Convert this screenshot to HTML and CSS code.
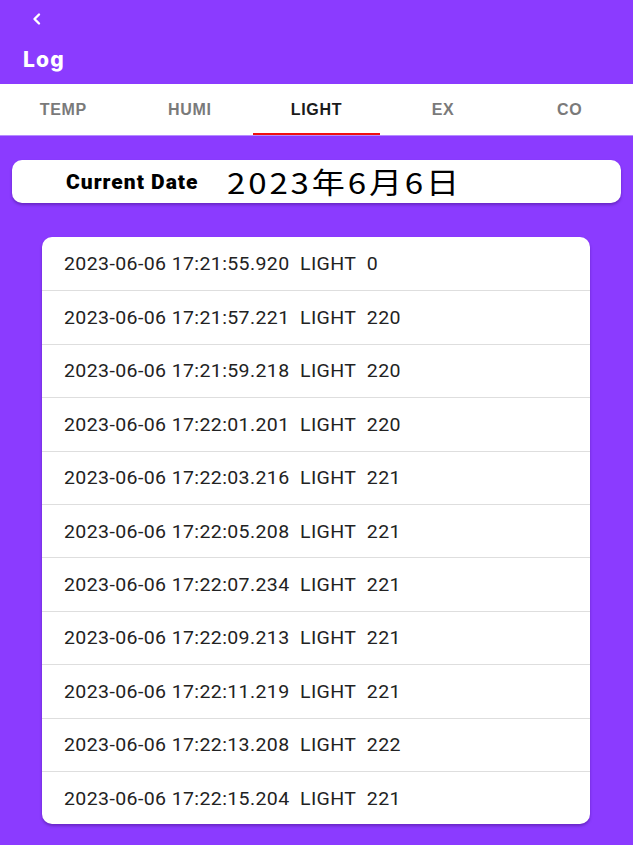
FILE: index.html
```html
<!DOCTYPE html>
<html>
<head>
<meta charset="utf-8">
<link rel="stylesheet" href="styles.css">
</head>
<body>
<div class="app">
  <header class="appbar">
    <div class="back">
      <svg width="14" height="14" viewBox="0 0 14 14"><path d="M9 2.5 L4.5 7 L9 11.5" fill="none" stroke="#fff" stroke-width="2.4" stroke-linecap="round" stroke-linejoin="round"/></svg>
    </div>
    <h1 class="title">Log</h1>
  </header>
  <nav class="tabs">
    <div class="tab">TEMP</div>
    <div class="tab">HUMI</div>
    <div class="tab active">LIGHT</div>
    <div class="tab">EX</div>
    <div class="tab">CO</div>
  </nav>
  <main class="content">
    <div class="date-card">
      <span class="date-label">Current Date</span>
      <span class="date-value">2023年6月6日</span>
    </div>
    <ul class="log-list">
      <li class="log-row"><span class="row-text">2023-06-06 17:21:55.920&nbsp; LIGHT&nbsp; 0</span></li>
      <li class="log-row"><span class="row-text">2023-06-06 17:21:57.221&nbsp; LIGHT&nbsp; 220</span></li>
      <li class="log-row"><span class="row-text">2023-06-06 17:21:59.218&nbsp; LIGHT&nbsp; 220</span></li>
      <li class="log-row"><span class="row-text">2023-06-06 17:22:01.201&nbsp; LIGHT&nbsp; 220</span></li>
      <li class="log-row"><span class="row-text">2023-06-06 17:22:03.216&nbsp; LIGHT&nbsp; 221</span></li>
      <li class="log-row"><span class="row-text">2023-06-06 17:22:05.208&nbsp; LIGHT&nbsp; 221</span></li>
      <li class="log-row"><span class="row-text">2023-06-06 17:22:07.234&nbsp; LIGHT&nbsp; 221</span></li>
      <li class="log-row"><span class="row-text">2023-06-06 17:22:09.213&nbsp; LIGHT&nbsp; 221</span></li>
      <li class="log-row"><span class="row-text">2023-06-06 17:22:11.219&nbsp; LIGHT&nbsp; 221</span></li>
      <li class="log-row"><span class="row-text">2023-06-06 17:22:13.208&nbsp; LIGHT&nbsp; 222</span></li>
      <li class="log-row"><span class="row-text">2023-06-06 17:22:15.204&nbsp; LIGHT&nbsp; 221</span></li>
    </ul>
  </main>
</div>
</body>
</html>
```
FILE: styles.css
```css
* { box-sizing: border-box; }
html, body { margin: 0; padding: 0; }
body {
  background: #8b3bff;
  font-family: Roboto, "Noto Sans", sans-serif;
  width: 633px;
  height: 845px;
  overflow: hidden;
}
.appbar {
  height: 84px;
  background: #8b3bff;
  padding: 11px 0 0 22px;
}
.back {
  width: 14px;
  height: 14px;
  margin-left: 8px;
}
.title {
  margin: 21px 0 0 1px;
  color: #fff;
  font-family: Inter, Lato, sans-serif;
  font-weight: 800;
  font-size: 21px;
  line-height: 28px;
  letter-spacing: 1.2px;
}
.tabs {
  display: flex;
  height: 52px;
  background: #fff;
  border-bottom: 1px solid #b58cff;
}
.tab {
  flex: 1;
  display: flex;
  align-items: center;
  justify-content: center;
  font-family: "Liberation Sans", Arial, sans-serif;
  font-weight: bold;
  font-size: 16px;
  letter-spacing: 0.7px;
  color: #7a7a7a;
  border-bottom: 2px solid transparent;
  padding-top: 2px;
}
.tab.active {
  color: #1a1a1a;
  border-bottom-color: #f01010;
}
.content {
  padding: 24px 12px 0 12px;
}
.date-card {
  height: 43px;
  background: #fff;
  border-radius: 10px;
  box-shadow: 0 2px 3px rgba(40, 0, 90, 0.35);
  display: flex;
  align-items: center;
  padding-left: 54px;
}
.date-label {
  font-family: Roboto, sans-serif;
  font-weight: 900;
  font-size: 21px;
  letter-spacing: 1px;
  color: #000;
  width: 161px;
  white-space: nowrap;
}
.date-value {
  display: inline-block;
  font-family: "Noto Sans CJK JP", "Noto Sans", sans-serif;
  font-size: 29px;
  color: #000;
  line-height: 1;
  letter-spacing: 2.5px;
  transform: scaleX(1.14);
  transform-origin: left center;
}
.log-list {
  list-style: none;
  margin: 34px 31px 0 30px;
  padding: 0;
  background: #fff;
  border-radius: 10px;
  box-shadow: 0 2px 3px rgba(40, 0, 90, 0.35);
  overflow: hidden;
}
.log-row {
  height: 53.4px;
  display: flex;
  align-items: center;
  padding-left: 22px;
  border-top: 1px solid #dedede;
}
.log-row:first-child { border-top: none; }
.row-text {
  display: inline-block;
  font-size: 18px;
  color: #222;
  letter-spacing: 0.35px;
  white-space: pre;
  transform: scaleX(1.085);
  transform-origin: left center;
}
```
